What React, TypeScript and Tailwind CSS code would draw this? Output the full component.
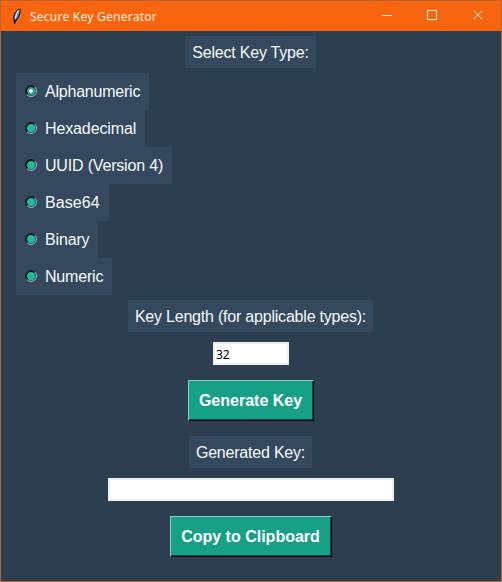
import { useState } from 'react';
import type { ReactNode } from 'react';

const keyTypes = [
  { label: 'Alphanumeric', style: 'w-[133px] tracking-[-0.22px]' },
  { label: 'Hexadecimal', style: 'w-[129px] tracking-[-0.12px]' },
  { label: 'UUID (Version 4)', style: 'w-[156px] tracking-[-0.18px]' },
  { label: 'Base64', style: 'w-[93px] tracking-[0.1px]' },
  { label: 'Binary', style: 'w-[82px] tracking-[-0.15px]' },
  { label: 'Numeric', style: 'w-[96px] tracking-[-0.18px]' },
];

function FeatherIcon() {
  return (
    <svg width="10" height="17" viewBox="0 0 10 17" className="shrink-0">
      <path d="M8.5 0.5 L5.5 1.5 L2.5 5 L1 9.5 L1.5 12 L2 16 L3.2 16 L4 13.5 L6 11 L7.5 8 L8.7 4 Z" fill="#17202d" />
      <path d="M7.8 1.6 L5.8 2.5 L3.2 6 L2.2 10.5 L3.5 12 L5.6 9.5 L7 6 Z" fill="#6f8fc0" />
      <path d="M6.8 2.3 L4.7 5.5 L3.2 10.5" fill="none" stroke="#d7e5f5" strokeWidth="1.2" />
    </svg>
  );
}

function RadioMark({ checked }: { checked: boolean }) {
  return (
    <svg width="12" height="12" viewBox="0 0 12 12" className="mb-px shrink-0">
      <circle cx="6" cy="6" r="4.5" fill={checked ? '#2a9f8b' : '#1abc9c'} />
      <path d="M2.1 9.9 A5.5 5.5 0 0 1 9.9 2.1" fill="none" stroke="#14222c" strokeWidth="1" />
      <path d="M2.8 9.2 A4.5 4.5 0 0 1 9.2 2.8" fill="none" stroke="#000" strokeWidth="1" />
      <path d="M9.9 2.1 A5.5 5.5 0 0 1 2.1 9.9" fill="none" stroke="#a4b4bf" strokeWidth="1" />
      <path d="M9.2 2.8 A4.5 4.5 0 0 1 2.8 9.2" fill="none" stroke="#34495e" strokeWidth="0.5" />
      {checked && <path d="M5 4h2v1h1v2H7v1H5V7H4V5h1z" fill="#fff" />}
    </svg>
  );
}

function Label({ width, children }: { width: string; children: ReactNode }) {
  return (
    <div className={`mr-px flex h-8 items-center justify-center pt-0.5 tracking-[-0.21px] whitespace-nowrap bg-[#34495e] ${width}`}>
      {children}
    </div>
  );
}

function RaisedButton({ width, children }: { width: string; children: ReactNode }) {
  return (
    <button
      type="button"
      className={`h-[41px] border border-t-[#8bd2c2] border-r-black border-b-black border-l-[#8bd2c2] bg-[#16a085] pr-[7px] pl-[6px] font-bold whitespace-nowrap text-white shadow-[inset_-1px_-1px_0_#0b5042] ${width}`}
    >
      {children}
    </button>
  );
}

export default function App() {
  const [selected, setSelected] = useState('Alphanumeric');
  const [length, setLength] = useState('32');

  return (
    <div className="flex h-[582px] w-[502px] flex-col overflow-hidden border border-[#b56536] bg-[#2c3e50] font-['Liberation_Sans',Arial,sans-serif] text-base leading-[18px] text-[#f6f9fa]">
      <header className="-mx-px -mt-px flex h-[31px] shrink-0 items-center border-t border-[#ff7422] bg-[#f9650e] pl-[12px] text-[#fff0df]">
        <FeatherIcon />
        <span className="ml-[8px] pt-px font-['Noto_Sans','Open_Sans',sans-serif] text-[12.2px] tracking-[0.15px]">Secure Key Generator</span>
        <div className="ml-auto flex items-center">
          <svg width="120" height="30" viewBox="382 0 120 30" fill="none" stroke="#fff0df">
            <path d="M382 14.5h10M427.5 9.5h9v9h-9zM473.5 9.5l9 9M482.5 9.5l-9 9" />
          </svg>
        </div>
      </header>

      <main className="flex flex-col items-center pt-[5px]">
        <Label width="w-[131px]">Select Key Type:</Label>

        <div role="radiogroup" className="mt-[5px] mb-[5px] flex flex-col items-start self-start pl-[15px]">
          {keyTypes.map(({ label, style }) => (
            <button
              key={label}
              type="button"
              role="radio"
              aria-checked={selected === label}
              onClick={() => setSelected(label)}
              className={`flex h-[37px] items-center gap-2 bg-[#34495e] pl-[9px] text-left whitespace-nowrap ${style}`}
            >
              <RadioMark checked={selected === label} />
              {label}
            </button>
          ))}
        </div>

        <Label width="w-[245px]">Key Length (for applicable types):</Label>
        <input
          aria-label="Key length"
          value={length}
          onChange={(event) => setLength(event.target.value)}
          className="mt-[10px] h-[23px] w-[76px] border-2 border-[#ecf0f1] bg-white px-px pt-px font-['Noto_Sans','Open_Sans',sans-serif] text-xs text-black outline-none"
        />
        <div className="mt-[15px] mb-[15px] flex">
          <RaisedButton width="w-[126px]">Generate Key</RaisedButton>
        </div>
        <Label width="w-[123px]">Generated Key:</Label>
        <input
          aria-label="Generated key"
          readOnly
          className="mt-[10px] h-[23px] w-[286px] border-2 border-[#ecf0f1] bg-white outline-none"
        />
        <div className="mt-[15px] flex">
          <RaisedButton width="w-[162px]">Copy to Clipboard</RaisedButton>
        </div>
      </main>
    </div>
  );
}
